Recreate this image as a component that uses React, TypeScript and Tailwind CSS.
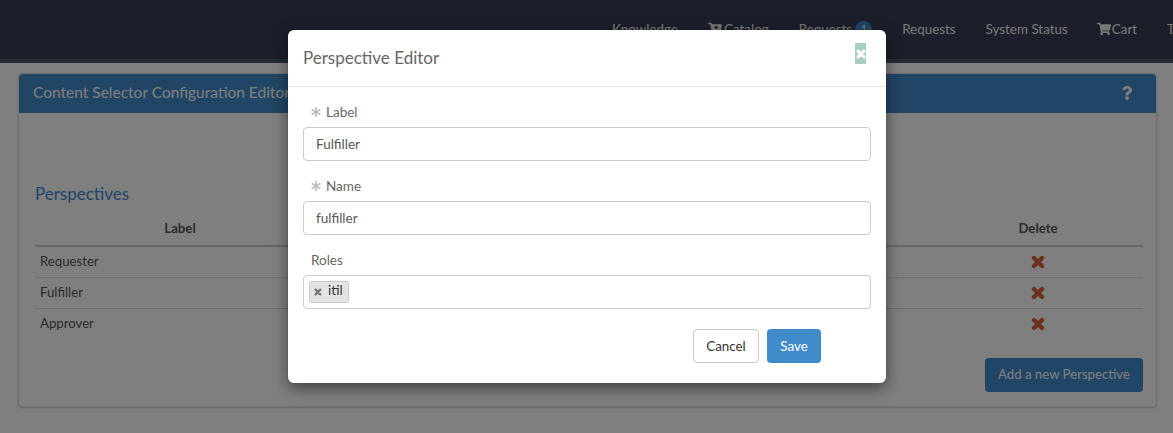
import { FaAsterisk, FaCartPlus, FaQuestion, FaShoppingCart } from "react-icons/fa";

const font = { fontFamily: '"Lato", "Liberation Sans", sans-serif' };

const perspectives = ["Requester", "Fulfiller", "Approver"];

// chunky cross, the icon set's own times glyph is too thin here
function Cross({ size, className }: { size: number; className?: string }) {
  return (
    <svg width={size} height={size} viewBox="0 0 14 14" className={className} aria-hidden="true">
      <path d="M3 3 L11 11 M11 3 L3 11" stroke="currentColor" strokeWidth="4.4" strokeLinecap="round" fill="none" />
    </svg>
  );
}

function NavBar() {
  return (
    <nav className="flex h-[59px] items-center overflow-hidden whitespace-nowrap bg-[#383e54] pb-[1px] pl-[612px] text-[13.4px] text-[#f2f2f2]">
      <span className="shrink-0">Knowledge</span>
      <span className="ml-[30px] flex shrink-0 items-center gap-[2px]">
        <FaCartPlus size={14} />
        Catalog
      </span>
      <span className="ml-[30px] shrink-0">Requests</span>
      <span className="ml-[3px] flex h-[17px] w-[17px] shrink-0 items-center justify-center rounded-full bg-[#428bca] text-[12px]">
        1
      </span>
      <span className="ml-[30px] shrink-0">Requests</span>
      <span className="ml-[30px] shrink-0">System Status</span>
      <span className="ml-[29px] flex shrink-0 items-center gap-[1px]">
        <FaShoppingCart size={14} />
        Cart
      </span>
      <span className="ml-[30px] shrink-0">Tours</span>
    </nav>
  );
}

function Panel() {
  return (
    <section className="ml-[18px] mr-[16px] mt-[10px] h-[334px] rounded-[4px] border border-[#e4e4e4] bg-white shadow-[0_1px_2px_rgba(0,0,0,0.2)]">
      <header className="flex h-[39px] items-center justify-between rounded-t-[4px] bg-[#428bca] pb-[1px] pl-[14px] pr-[22px] text-[15.5px] text-white">
        <h1>Content Selector Configuration Editor</h1>
        <FaQuestion size={14} />
      </header>
      <div className="pl-[16px] pr-[13px]">
        <h2 className="mt-[69px] text-[17px] leading-[24px] text-[#428bca]">Perspectives</h2>
        <table className="mt-[7px] w-full table-fixed text-[13.2px] text-[#555]">
          <thead>
            <tr className="h-[33px] border-b-2 border-[#ccc]">
              <th className="w-[290px] font-bold">Label</th>
              <th />
              <th className="w-[210px] font-bold">Delete</th>
            </tr>
          </thead>
          <tbody>
            {perspectives.map((name, index) => (
              <tr key={name} className={index < 2 ? "h-[31px] border-b border-[#ddd]" : "h-[31px]"}>
                <td className="pl-[5px]">{name}</td>
                <td />
                <td>
                  <Cross size={14} className="mx-auto text-[#d8623a]" />
                </td>
              </tr>
            ))}
          </tbody>
        </table>
        <div className="mt-[19px] flex justify-end">
          <button className="h-[34px] w-[158px] rounded-[4px] bg-[#428bca] text-[13.2px] text-white">
            Add a new Perspective
          </button>
        </div>
      </div>
    </section>
  );
}

function Field({ label, value, required }: { label: string; value: string; required: boolean }) {
  return (
    <div className="mb-[16px]">
      <div className="mb-[6px] flex h-[18px] items-center gap-[5px] pl-[8px] text-[13.5px] text-[#666]">
        {required ? <FaAsterisk size={10} className="text-[#bbb]" /> : null}
        {label}
      </div>
      <input
        readOnly
        value={value}
        className="h-[34px] w-full rounded-[4px] border border-[#ccc] px-[12px] text-[13.5px] text-[#555] outline-none"
      />
    </div>
  );
}

function Modal() {
  return (
    <div className="absolute left-[288px] top-[30px] h-[353px] w-[598px] rounded-[6px] bg-white shadow-[0_5px_15px_rgba(0,0,0,0.5)]">
      <header className="flex h-[57px] items-start justify-between border-b border-[#e5e5e5] pl-[15px] pr-[20px]">
        <h2 className="mt-[15px] text-[17px] text-[#666]">Perspective Editor</h2>
        <button className="mt-[13px] flex h-[21px] w-[11px] items-center justify-center overflow-hidden bg-[#a8cfc0] text-white">
          <Cross size={10} className="shrink-0" />
        </button>
      </header>
      <div className="px-[15px] pt-[16px]">
        <Field label="Label" value="Fulfiller" required />
        <Field label="Name" value="fulfiller" required />
        <div className="mb-[6px] flex h-[18px] items-center pl-[8px] text-[13.5px] text-[#666]">Roles</div>
        <div className="flex h-[34px] items-center rounded-[4px] border border-[#ccc] px-[5px]">
          <span className="flex h-[22px] w-[40px] items-center gap-[6px] rounded-[3px] border border-[#ccc] bg-[#e4e4e4] pb-[4px] pl-[4px] text-[13.5px] text-[#333]">
            <Cross size={8} className="mt-[4px] shrink-0 text-[#777]" />
            itil
          </span>
        </div>
        <div className="mt-[20px] flex justify-end gap-[8px] pr-[50px]">
          <button className="h-[34px] w-[66px] rounded-[4px] border border-[#ccc] bg-white text-[13.4px] text-[#333]">
            Cancel
          </button>
          <button className="h-[34px] w-[54px] rounded-[4px] bg-[#428bca] text-[13.4px] text-white">Save</button>
        </div>
      </div>
    </div>
  );
}

export default function App() {
  return (
    <div className="relative h-[433px] overflow-hidden bg-white" style={font}>
      <NavBar />
      <div className="h-[4px] bg-[#4a5a68]" />
      <Panel />
      <div className="absolute inset-0 bg-black/50" />
      <Modal />
    </div>
  );
}
